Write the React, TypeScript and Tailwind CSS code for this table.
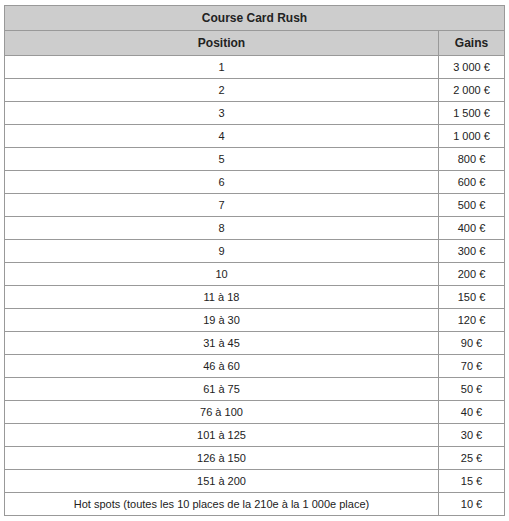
import React from "react";

const rows: [string, string][] = [
  ["1", "3 000 €"],
  ["2", "2 000 €"],
  ["3", "1 500 €"],
  ["4", "1 000 €"],
  ["5", "800 €"],
  ["6", "600 €"],
  ["7", "500 €"],
  ["8", "400 €"],
  ["9", "300 €"],
  ["10", "200 €"],
  ["11 à 18", "150 €"],
  ["19 à 30", "120 €"],
  ["31 à 45", "90 €"],
  ["46 à 60", "70 €"],
  ["61 à 75", "50 €"],
  ["76 à 100", "40 €"],
  ["101 à 125", "30 €"],
  ["126 à 150", "25 €"],
  ["151 à 200", "15 €"],
  ["Hot spots (toutes les 10 places de la 210e à la 1 000e place)", "10 €"],
];

export default function App() {
  return (
    <div className="bg-white w-[509px] h-[521px] pl-[4px] pt-[5px] font-['Liberation_Sans',Arial,sans-serif] text-[11px] text-[#222]">
      <table className="border-collapse w-[500px] table-fixed">
        <colgroup>
          <col className="w-[434px]" />
          <col className="w-[66px]" />
        </colgroup>
        <tbody>
          <tr className="bg-[#cdcdcd] h-[25px]">
            <td colSpan={2} className="border border-[#999] text-center font-bold text-[12px] p-0">
              Course Card Rush
            </td>
          </tr>
          <tr className="bg-[#cdcdcd] h-[25px]">
            <td className="border border-[#999] text-center font-bold text-[12px] p-0">Position</td>
            <td className="border border-[#999] text-center font-bold text-[12px] p-0">Gains</td>
          </tr>
          {rows.map(([p, g]) => (
            <tr key={p} className="h-[23px]">
              <td className="border border-[#999] text-center p-0">{p}</td>
              <td className="border border-[#999] text-center p-0">{g}</td>
            </tr>
          ))}
        </tbody>
      </table>
    </div>
  );
}
